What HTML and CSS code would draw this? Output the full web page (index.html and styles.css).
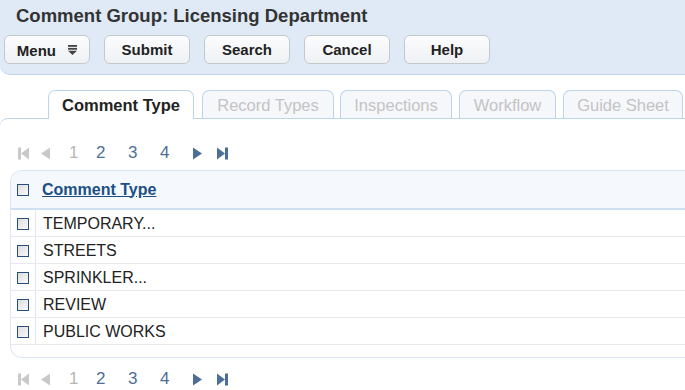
FILE: index.html
```html
<!DOCTYPE html>
<html lang="en">
  <head>
    <meta charset="UTF-8" />
    <title>Comment Group</title>
    <link rel="stylesheet" href="styles.css">
  </head>
  <body>
    <div class="header">
      <h1>Comment Group: Licensing Department</h1>
      <div class="toolbar">
        <button class="btn">Menu <span class="menu-icon"><svg width="9" height="10" viewBox="0 0 9 10"><rect x="0" y="0" width="9" height="1.8" fill="#444"/><rect x="0" y="2.9" width="9" height="1.8" fill="#444"/><path d="M0 5.8 H9 L4.5 10 Z" fill="#444"/></svg></span></button>
        <button class="btn">Submit</button>
        <button class="btn">Search</button>
        <button class="btn">Cancel</button>
        <button class="btn">Help</button>
      </div>
    </div>

    <div class="tabs">
      <div class="tab active tab-comment">Comment Type</div>
      <div class="tab tab-record">Record Types</div>
      <div class="tab tab-insp">Inspections</div>
      <div class="tab tab-flow">Workflow</div>
      <div class="tab tab-guide">Guide Sheet</div>
    </div>

    <div class="panel">
      <div class="pager">
        <svg class="pi first" width="11" height="13" viewBox="0 0 11 13"><rect x="0" y="0.5" width="3" height="12" fill="#c9c9c9"/><path d="M11 0.5 V12.5 L3 6.5 Z" fill="#c9c9c9"/></svg>
        <svg class="pi prev" width="9" height="13" viewBox="0 0 9 13"><path d="M9 0.5 V12.5 L0 6.5 Z" fill="#c9c9c9"/></svg>
        <span class="pg off">1</span>
        <span class="pg">2</span>
        <span class="pg">3</span>
        <span class="pg">4</span>
        <svg class="pi next" width="9" height="13" viewBox="0 0 9 13"><path d="M0 0.5 V12.5 L9 6.5 Z" fill="#4d6f97"/></svg>
        <svg class="pi last" width="11" height="13" viewBox="0 0 11 13"><path d="M0 0.5 V12.5 L8 6.5 Z" fill="#4d6f97"/><rect x="8" y="0.5" width="3" height="12" fill="#4d6f97"/></svg>
      </div>

      <div class="grid">
        <div class="grid-head">
          <span class="cb"></span>
          <a class="sort" href="#">Comment Type</a>
        </div>
        <div class="row"><div class="cell-cb"><span class="cb"></span></div><div class="cell">TEMPORARY...</div></div>
        <div class="row"><div class="cell-cb"><span class="cb"></span></div><div class="cell">STREETS</div></div>
        <div class="row"><div class="cell-cb"><span class="cb"></span></div><div class="cell">SPRINKLER...</div></div>
        <div class="row"><div class="cell-cb"><span class="cb"></span></div><div class="cell">REVIEW</div></div>
        <div class="row"><div class="cell-cb"><span class="cb"></span></div><div class="cell">PUBLIC WORKS</div></div>
        <div class="grid-foot"></div>
      </div>

      <div class="pager bottom">
        <svg class="pi first" width="11" height="13" viewBox="0 0 11 13"><rect x="0" y="0.5" width="3" height="12" fill="#c9c9c9"/><path d="M11 0.5 V12.5 L3 6.5 Z" fill="#c9c9c9"/></svg>
        <svg class="pi prev" width="9" height="13" viewBox="0 0 9 13"><path d="M9 0.5 V12.5 L0 6.5 Z" fill="#c9c9c9"/></svg>
        <span class="pg off">1</span>
        <span class="pg">2</span>
        <span class="pg">3</span>
        <span class="pg">4</span>
        <svg class="pi next" width="9" height="13" viewBox="0 0 9 13"><path d="M0 0.5 V12.5 L9 6.5 Z" fill="#4d6f97"/></svg>
        <svg class="pi last" width="11" height="13" viewBox="0 0 11 13"><path d="M0 0.5 V12.5 L8 6.5 Z" fill="#4d6f97"/><rect x="8" y="0.5" width="3" height="12" fill="#4d6f97"/></svg>
      </div>
    </div>
  </body>
</html>
```

FILE: styles.css
```css
body {
  margin: 0;
  font-family: "Liberation Sans", Arial, sans-serif;
  color: #222;
  background: #fff;
  overflow: hidden;
}
.header {
  background: #dfeaf6;
  border-bottom: 1px solid #bcd3ea;
  border-bottom-left-radius: 10px;
  height: 75px;
  box-sizing: border-box;
  padding: 5px 0 0 0;
}
h1 {
  font-size: 18.5px;
  font-weight: bold;
  color: #333;
  margin: 0 0 0 16px;
  line-height: 22px;
}
.toolbar {
  display: flex;
  gap: 14px;
  margin: 8px 0 0 4px;
}
.btn {
  width: 86px;
  height: 29px;
  font-family: "Liberation Sans", Arial, sans-serif;
  font-size: 15px;
  font-weight: bold;
  color: #222;
  border: 1px solid #c6c9cc;
  border-radius: 6px;
  background: linear-gradient(#fbfcfd, #eef1f4);
  padding: 0;
  cursor: pointer;
}
.menu-icon {
  margin-left: 8px;
  vertical-align: 1px;
}
.tabs {
  display: flex;
  gap: 7px;
  padding-left: 48px;
  margin-top: 15px;
  position: relative;
  z-index: 1;
}
.tab {
  flex: 0 0 auto;
  height: 28px;
  box-sizing: border-box;
  line-height: 28px;
  text-align: center;
  white-space: nowrap;
  font-size: 16.5px;
  color: #c4c4c4;
  background: #f5f7fa;
  border: 1px solid #bcd4ec;
  border-bottom: none;
  border-radius: 7px 7px 0 0;
}
.tab.active {
  background: #fff;
  color: #222;
  font-weight: bold;
  height: 29px;
}
.tab-comment { width: 146px; }
.tab-record { width: 132px; margin-left: 1px; }
.tab-insp { width: 112px; margin-left: -1px; }
.tab-flow { width: 97px; }
.tab-guide { width: 120px; }
.panel {
  border-top: 1px solid #bcd4ec;
  border-top-left-radius: 8px;
  margin-top: -1px;
}
.pager {
  display: flex;
  align-items: center;
  height: 20px;
  margin: 24px 0 0 18px;
  font-size: 17px;
}
.pager.bottom {
  margin-top: 11px;
}
.pi.prev {
  margin-left: 12px;
}
.pg {
  color: #4d6f97;
  width: 32px;
}
.pg.off {
  color: #b5b5b5;
  margin-left: 19px;
  width: 27px;
}
.pi.next {
  margin-left: 1px;
}
.pi.last {
  margin-left: 15px;
}
.grid {
  margin: 7px 0 0 10px;
  border: 1px solid #dbe6f2;
  border-right: none;
  border-radius: 12px 0 0 12px;
  overflow: hidden;
}
.grid-head {
  height: 37px;
  background: #f5f9fd;
  border-bottom: 2px solid #cfe0f3;
  display: flex;
  align-items: center;
  padding-left: 6px;
}
.sort {
  font-size: 16px;
  font-weight: bold;
  color: #1b4f86;
  margin-left: 13px;
  text-decoration: underline;
}
.cb {
  display: inline-block;
  width: 10px;
  height: 10px;
  border: 1.5px solid #274f7c;
  background: linear-gradient(135deg, #dcdcdc, #fafafa);
}
.row {
  display: flex;
  height: 27px;
  border-bottom: 1px solid #e7e9ec;
  box-sizing: border-box;
}
.cell-cb {
  width: 25px;
  border-right: 1px solid #dbe6f2;
  display: flex;
  align-items: center;
  padding-left: 6px;
  box-sizing: border-box;
}
.cell-cb .cb {
  margin-top: 2px;
}
.cell {
  padding-left: 7px;
  font-size: 16px;
  line-height: 27px;
  color: #222;
}
.grid-foot {
  height: 12px;
}
```
